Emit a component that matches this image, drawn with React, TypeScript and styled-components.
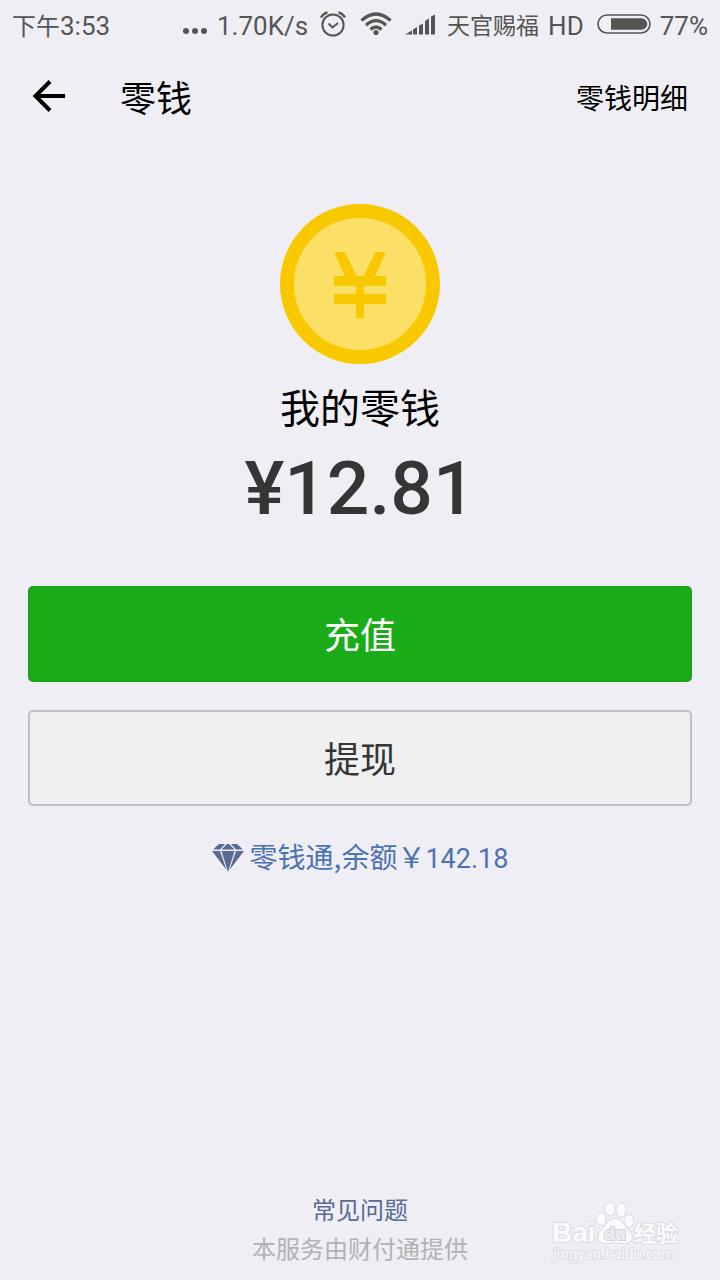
import React from 'react';
import styled, { createGlobalStyle } from 'styled-components';

const GlobalStyle = createGlobalStyle`
  *, *::before, *::after { box-sizing: border-box; }
  body {
    margin: 0;
    background: #efeef4;
    font-family: Roboto, "Noto Sans CJK SC", sans-serif;
  }
  h1, h2, p { margin: 0; font-weight: 400; }
  svg { display: block; flex: none; }
`;

const Page = styled.div`
  position: relative;
  min-height: 100vh;
  display: flex;
  flex-direction: column;
`;

const StatusBar = styled.div`
  display: flex;
  align-items: center;
  justify-content: space-between;
  height: 50px;
  padding: 0 12px;
  color: #555555;
  line-height: 28px;
`;

const StatusGroup = styled.div`
  display: flex;
  align-items: center;
`;

const StatusText = styled.span<{ $gap?: number }>`
  font-size: 26px;
  line-height: 28px;
  margin-left: ${p => p.$gap ?? 0}px;
  padding-top: 2px;
  white-space: nowrap;
`;

const StatusHan = styled(StatusText)<{ $small?: boolean }>`
  font-size: ${p => (p.$small ? 23 : 24)}px;
  padding-top: 4px;
`;

const StatusIcon = styled.svg<{ $gap: number }>`
  margin-left: ${p => p.$gap}px;
`;

const Header = styled.header`
  display: flex;
  align-items: center;
  height: 94px;
  padding: 0 32px;
  color: #000;
`;

const BackButton = styled.button`
  border: 0;
  padding: 0 0 2px;
  background: none;
  color: inherit;
  cursor: pointer;
`;

const Title = styled.h1`
  flex: 1;
  margin-left: 54px;
  padding-top: 6px;
  font-size: 36px;
  line-height: 48px;
`;

const HeaderLink = styled.a`
  padding-top: 6px;
  color: inherit;
  font-size: 28px;
  line-height: 40px;
  text-decoration: none;
`;

const Main = styled.main`
  flex: 1;
  display: flex;
  flex-direction: column;
  align-items: center;
  padding: 60px 28px 28px;
`;

const Label = styled.h2`
  margin-top: 18px;
  color: #000;
  font-size: 40px;
  line-height: 56px;
`;

const Balance = styled.p`
  margin-top: 6px;
  color: #353535;
  font-size: 75px;
  font-weight: 500;
  line-height: 88px;
`;

const Actions = styled.div`
  align-self: stretch;
  display: flex;
  flex-direction: column;
  gap: 28px;
  margin-top: 54px;
`;

const ActionButton = styled.button<{ $primary?: boolean }>`
  height: 96px;
  padding: 6px 0 0;
  border: 2px solid ${p => (p.$primary ? '#1ea01e' : '#bfbfbf')};
  border-radius: 5px;
  background: ${p => (p.$primary ? '#1aad19' : '#f0f0f0')};
  color: ${p => (p.$primary ? '#fff' : '#353535')};
  font-family: inherit;
  font-size: 36px;
  line-height: 48px;
  cursor: pointer;
`;

const FundLink = styled.a`
  display: flex;
  align-items: center;
  gap: 6px;
  margin-top: 30px;
  color: #4c72b4;
  line-height: 40px;
  text-decoration: none;
`;

const FundText = styled.span`
  font-family: "Noto Sans CJK SC", sans-serif;
  font-size: 28px;
`;

const FundAmount = styled.span`
  font-family: Roboto, sans-serif;
  font-size: 27px;
`;

const Footer = styled.footer`
  display: flex;
  flex-direction: column;
  align-items: center;
  gap: 3px;
  padding-bottom: 12px;
  font-size: 24px;
  line-height: 36px;
`;

const HelpLink = styled.a`
  color: #576b95;
  text-decoration: none;
`;

const Provider = styled.p`
  color: #b2b2b2;
`;

const Watermark = styled.svg`
  position: absolute;
  right: 36px;
  bottom: 12px;
`;

export default function App() {
  return (
    <>
      <GlobalStyle />
      <Page>
        <StatusBar>
          <StatusGroup>
            <StatusHan>下午</StatusHan>
            <StatusText>3:53</StatusText>
          </StatusGroup>
          <StatusGroup>
            <svg width="24" height="26" viewBox="0 0 24 26" fill="#555">
              <circle cx="3" cy="19" r="3" />
              <circle cx="12" cy="19" r="3" />
              <circle cx="21" cy="19" r="3" />
            </svg>
            <StatusText $gap={10}>1.70K/s</StatusText>
            <StatusIcon $gap={11} width="28" height="28" viewBox="0 0 28 28" fill="none" stroke="#555" strokeWidth="2">
              <circle cx="14" cy="14" r="10.6" />
              <path d="M9.5 12.5 13.5 16.5 19 12" />
              <path d="M2 6.500Q4 2.500 8.500 1.300M26 6.500Q24 2.500 19.500 1.300" strokeWidth="2.400" />
            </StatusIcon>
            <StatusIcon $gap={13} width="32" height="28" viewBox="0 0 32 28" fill="none" stroke="#555" strokeWidth="3.200">
              <path d="M1.500 9.500Q16-3.500 30.500 9.500" />
              <path d="M6 14.200Q16 5 26 14.200" />
              <path d="M10.500 18.500Q16 13.500 21.500 18.500" />
              <circle cx="16" cy="21.500" r="2.600" fill="#555" stroke="none" />
            </StatusIcon>
            <StatusIcon $gap={13} width="31" height="28" viewBox="0 0 31 28" fill="#555">
              <path d="M0 23.500 7 19.500V23.500ZM8 18.500 12 16V23.500H8ZM14 14.500 18 12.500V23.500H14ZM20 10 24 7.500V23.500H20ZM26 5.500 30 3.500V23.500H26Z" />
            </StatusIcon>
            <StatusHan $small $gap={11}>天官赐福</StatusHan>
            <StatusText $gap={9}>HD</StatusText>
            <StatusIcon $gap={13} width="54" height="28" viewBox="0 0 54 28">
              <rect x="1" y="4" width="52" height="18" rx="9" fill="none" stroke="#555" strokeWidth="1.600" />
              <path d="M14 7.200H44.500A5.800 5.800 0 0 1 44.500 18.800H14Z" fill="#555" />
            </StatusIcon>
            <StatusText $gap={9}>77%</StatusText>
          </StatusGroup>
        </StatusBar>

        <Header>
          <BackButton aria-label="返回">
            <svg width="34" height="32" viewBox="0 0 34 32" fill="none" stroke="#000" strokeWidth="4">
              <path d="M18 1.500 3.500 16 18 30.500M3 16H33" />
            </svg>
          </BackButton>
          <Title>零钱</Title>
          <HeaderLink href="#details">零钱明细</HeaderLink>
        </Header>

        <Main>
          <svg width="160" height="160" viewBox="0 0 160 160">
            <circle cx="80" cy="80" r="73" fill="#fcdf67" stroke="#f9c900" strokeWidth="14" />
            <path
              d="M54 48H65L76.500 72H84L95 48H106L95 72H106V82H84V90H106V100H84V114H76V100H54V90H76V82H54V72H65Z"
              fill="#f9c900"
            />
          </svg>
          <Label>我的零钱</Label>
          <Balance>¥12.81</Balance>
          <Actions>
            <ActionButton $primary>充值</ActionButton>
            <ActionButton>提现</ActionButton>
          </Actions>
          <FundLink href="#fund">
            <svg width="32" height="28" viewBox="0 0 32 28" fill="#576b95">
              <path d="M7 0H13L8 5.500H1ZM15 0H17L22.500 5.500H9.500ZM19 0H25L31 5.500H24ZM0 7H8L14.500 26ZM9.500 7H22.500L16 28ZM24 7H32L17.500 26Z" />
            </svg>
            <FundText>
              零钱通,余额￥<FundAmount>142.18</FundAmount>
            </FundText>
          </FundLink>
        </Main>

        <Footer>
          <HelpLink href="#help">常见问题</HelpLink>
          <Provider>本服务由财付通提供</Provider>
        </Footer>

        <Watermark
          width="134"
          height="68"
          viewBox="0 0 134 68"
          fill="#fbfbfd"
          stroke="#dcdce2"
          strokeWidth="2"
          paintOrder="stroke"
          fontFamily="'Liberation Sans', 'Noto Sans CJK SC', sans-serif"
        >
          <text x="2" y="42" fontSize="28" fontWeight="700">Bai</text>
          <ellipse cx="51" cy="19" rx="4.500" ry="6" />
          <ellipse cx="60" cy="9" rx="4.500" ry="6.500" />
          <ellipse cx="71" cy="10" rx="4.500" ry="6.500" />
          <ellipse cx="79" cy="21" rx="4.500" ry="6" />
          <path d="M65 19C58 19 56 26 51 31C45 37 49 44 57 43C62 42 68 42 73 43C81 44 85 37 79 31C74 26 72 19 65 19Z" />
          <text x="54" y="40" fontSize="18" fontWeight="700" fill="#eeeef3" stroke="#d2d2d8">du</text>
          <text x="84" y="41" fontSize="22" fontWeight="700">经验</text>
          <text x="3" y="59" fontSize="14" fontFamily="'Noto Sans', sans-serif">jingyan.baidu.com</text>
        </Watermark>
      </Page>
    </>
  );
}
